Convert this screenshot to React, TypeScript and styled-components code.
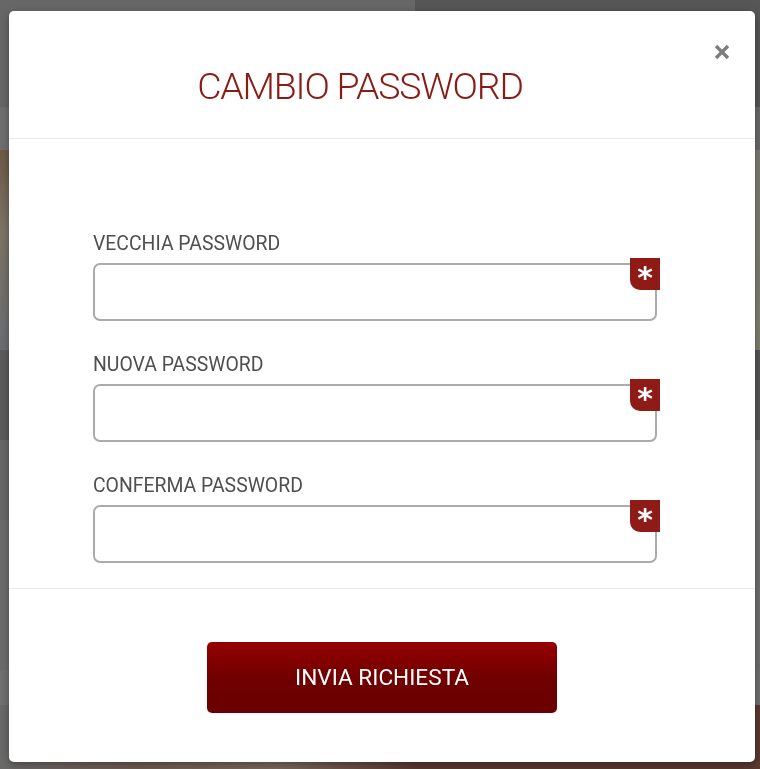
import React from "react";
import styled, { createGlobalStyle } from "styled-components";

const GlobalStyle = createGlobalStyle`
  html, body {
    margin: 0;
    padding: 0;
    height: 100%;
    overflow: hidden;
  }
  body {
    font-family: Roboto, "Liberation Sans", Arial, sans-serif;
    background: #5f5f5f;
  }
  * {
    box-sizing: border-box;
  }
`;

type Band = { h: number; left: string; right: string };

const bands: Band[] = [
  { h: 107, left: "#676767", right: "#565656" },
  { h: 43, left: "#6f6f6f", right: "#6a6a6a" },
  { h: 200, left: "linear-gradient(180deg,#6d5a45,#7c7466 40%,#6a6d72)", right: "linear-gradient(180deg,#7b7b72,#80806c)" },
  { h: 90, left: "#5c5c5c", right: "#565656" },
  { h: 80, left: "#676767", right: "#737373" },
  { h: 150, left: "#6c6c6c", right: "#6e6e6e" },
  { h: 35, left: "#717171", right: "#707070" },
  { h: 64, left: "linear-gradient(90deg,#6a6a6a,#705c50,#7c6a5c,#5a3a30)", right: "#5a3a30" },
];

const fields = ["VECCHIA PASSWORD", "NUOVA PASSWORD", "CONFERMA PASSWORD"];

export default function App() {
  return (
    <>
      <GlobalStyle />
      <Page>
        {bands.map((b, i) => (
          <PageRow key={i} $h={b.h}>
            <PageCell $bg={b.left} />
            <PageCell $bg={b.right} />
          </PageRow>
        ))}
      </Page>
      <Overlay>
        <Modal>
          <Header>
            <Title>CAMBIO PASSWORD</Title>
            <CloseButton aria-label="Chiudi">
              <svg width="16" height="16" viewBox="0 0 16 16">
                <path d="M2 2 L14 14 M14 2 L2 14" stroke="#7d7d7d" strokeWidth="3.4" strokeLinecap="butt" />
              </svg>
            </CloseButton>
          </Header>
          <Body>
            {fields.map((f) => (
              <Field key={f}>
                <Label>{f}</Label>
                <InputWrap>
                  <Input type="password" />
                  <Required>*</Required>
                </InputWrap>
              </Field>
            ))}
          </Body>
          <Footer>
            <SubmitButton type="button">INVIA RICHIESTA</SubmitButton>
          </Footer>
        </Modal>
      </Overlay>
    </>
  );
}

const Page = styled.div`
  display: flex;
  flex-direction: column;
  height: 769px;
`;

const PageRow = styled.div<{ $h: number }>`
  display: grid;
  grid-template-columns: 415px 1fr;
  height: ${(p) => p.$h}px;
  flex-shrink: 0;
`;

const PageCell = styled.div<{ $bg: string }>`
  background: ${(p) => p.$bg};
`;

const Overlay = styled.div`
  position: fixed;
  inset: 0;
  padding: 11px 5px 7px 9px;
  display: flex;
  align-items: flex-start;
  justify-content: center;
`;

const Modal = styled.div`
  width: 746px;
  height: 751px;
  background: #ffffff;
  border-radius: 5px;
  box-shadow: 0 3px 9px rgba(0, 0, 0, 0.35);
  display: flex;
  flex-direction: column;
  overflow: hidden;
`;

const Header = styled.div`
  position: relative;
  height: 128px;
  padding: 53px 44px 0 0;
  border-bottom: 1px solid #e6e8ea;
  text-align: center;
`;

const Title = styled.h2`
  margin: 0;
  font-family: Roboto, "Liberation Sans", sans-serif;
  font-weight: 300;
  font-size: 37.5px;
  line-height: 44px;
  letter-spacing: -1.2px;
  color: #8a1c17;
`;

const CloseButton = styled.button`
  position: absolute;
  top: 33px;
  right: 25px;
  width: 16px;
  height: 16px;
  padding: 0;
  border: 0;
  background: none;
  display: flex;
  cursor: pointer;
`;

const Body = styled.div`
  height: 450px;
  padding: 93px 84px 0 84px;
  border-bottom: 1px solid #e6e8ea;
  display: flex;
  flex-direction: column;
  gap: 32px;
`;

const Field = styled.div`
  display: flex;
  flex-direction: column;
  gap: 8px;
`;

const Label = styled.label`
  font-size: 19.4px;
  line-height: 23px;
  color: #4f4f4f;
`;

const InputWrap = styled.div`
  position: relative;
  width: 564px;
`;

const Input = styled.input`
  display: block;
  width: 100%;
  height: 58px;
  border: 2px solid #ababab;
  border-radius: 7px;
  padding: 0 16px;
  font-size: 18px;
  outline: none;
`;

const Required = styled.span`
  position: absolute;
  top: -5px;
  right: -3px;
  width: 30px;
  height: 32px;
  background: #8e1b16;
  border-bottom-left-radius: 10px;
  color: #ffffff;
  font-family: "DejaVu Sans", sans-serif;
  font-weight: bold;
  font-size: 30px;
  line-height: 40px;
  text-align: center;
`;

const Footer = styled.div`
  flex: 1;
  display: flex;
  justify-content: center;
  padding-top: 53px;
`;

const SubmitButton = styled.button`
  width: 350px;
  height: 71px;
  border: 0;
  border-radius: 5px;
  background: linear-gradient(180deg, #950000 0%, #6e0000 55%, #6a0000 100%);
  color: #ffffff;
  font-family: Roboto, "Liberation Sans", sans-serif;
  font-size: 22.6px;
  font-weight: 400;
  cursor: pointer;
`;
